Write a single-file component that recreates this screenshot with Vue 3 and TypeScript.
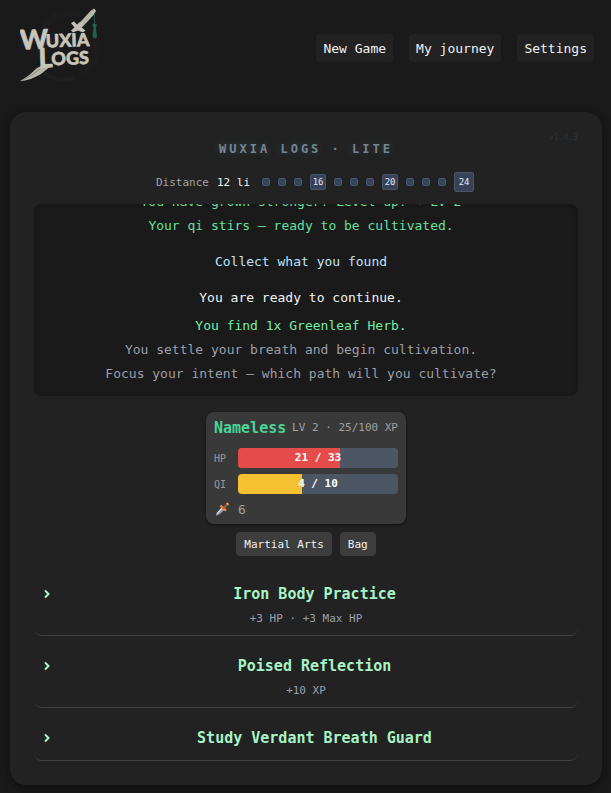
<script setup lang="ts">
interface LogLine {
  text: string
  tone: 'gain' | 'find' | 'prompt' | 'plain' | 'muted'
}

interface Marker {
  label?: string
  size: 'dot' | 'stop' | 'goal'
}

interface Stat {
  label: string
  kind: 'hp' | 'qi'
  current: number
  max: number
}

interface Choice {
  title: string
  detail?: string
}

const navItems: string[] = ['New Game', 'My journey', 'Settings']

const markers: Marker[] = [
  { size: 'dot' }, { size: 'dot' }, { size: 'dot' }, { size: 'stop', label: '16' },
  { size: 'dot' }, { size: 'dot' }, { size: 'dot' }, { size: 'stop', label: '20' },
  { size: 'dot' }, { size: 'dot' }, { size: 'dot' }, { size: 'goal', label: '24' },
]

const logLines: LogLine[] = [
  { text: 'You have grown stronger! Level up! → LV 2', tone: 'gain' },
  { text: 'Your qi stirs — ready to be cultivated.', tone: 'gain' },
  { text: 'Collect what you found', tone: 'prompt' },
  { text: 'You are ready to continue.', tone: 'plain' },
  { text: 'You find 1x Greenleaf Herb.', tone: 'find' },
  { text: 'You settle your breath and begin cultivation.', tone: 'muted' },
  { text: 'Focus your intent — which path will you cultivate?', tone: 'muted' },
]

const stats: Stat[] = [
  { label: 'HP', kind: 'hp', current: 21, max: 33 },
  { label: 'QI', kind: 'qi', current: 4, max: 10 },
]

const choices: Choice[] = [
  { title: 'Iron Body Practice', detail: '+3 HP · +3 Max HP' },
  { title: 'Poised Reflection', detail: '+10 XP' },
  { title: 'Study Verdant Breath Guard' },
]

const fill = (s: Stat): string => `${(s.current / s.max) * 100}%`
</script>

<template>
  <div class="page">
    <header class="top">
      <a class="logo" href="#" aria-label="Wuxia Logs">
        <svg width="84" height="80" viewBox="0 0 84 80" aria-hidden="true">
          <g fill="none" stroke="#1c1c1c" stroke-linecap="round">
            <path d="M25 18C34 6 48 2 60 6" stroke-width="8" />
            <path d="M75 32C80 46 74 60 62 66" stroke-width="7" />
            <path d="M26 66C34 72 44 73 54 70" stroke-width="4" stroke="#1f1f1f" />
          </g>
          <path d="M57.500 17L70.500 3L74 0.500L76 2.500L74.500 6L61 20.500Z" fill="#b9b6ac" />
          <path d="M51 15L54 13.500L57 16.500L60 14L62.500 16L61 19L65.500 22.500L63 24.500L58 22.500L53 24.500L51 22.500L54.500 19.500Z" fill="#c3c0b6" />
          <path d="M74.500 5V16" stroke="#24594a" stroke-width="1" />
          <path d="M72 17L74.500 15L77 17L76 19.500L77 29L75.500 30.500L73.500 30L72.500 28L73.500 19.500Z" fill="#216049" />
          <path d="M17 60L21 58L32 57L21 66C14 70 7 73 0 73C7 69 12 65 17 60Z" fill="#b9b6ac" />
          <path d="M3 72L12 67L20 61" stroke="#8b887f" stroke-width="1" fill="none" />
          <g class="wordmark" transform="rotate(-2 40 40)">
            <text x="0" y="40" font-size="27">W</text>
            <text x="26" y="39" font-size="18">UXIA</text>
            <text x="18" y="59" font-size="27">L</text>
            <text x="31" y="57" font-size="18">OGS</text>
          </g>
        </svg>
      </a>
      <nav class="nav">
        <button v-for="item in navItems" :key="item" type="button" class="nav-button">{{ item }}</button>
      </nav>
    </header>

    <main class="panel">
      <span class="version">v1.4.3</span>
      <h1 class="title">WUXIA LOGS · LITE</h1>

      <div class="distance">
        <span class="distance-label">Distance</span>
        <span class="distance-value">12 li</span>
        <div class="track">
          <span v-for="(m, i) in markers" :key="i" class="marker" :class="m.size">{{ m.label }}</span>
        </div>
      </div>

      <section class="log" aria-label="Journey log">
        <p v-for="line in logLines" :key="line.text" class="line" :class="line.tone">{{ line.text }}</p>
      </section>

      <section class="hero">
        <div class="hero-head">
          <strong class="hero-name">Nameless</strong>
          <span class="hero-level">LV 2 · 25/100 XP</span>
        </div>
        <div v-for="s in stats" :key="s.kind" class="stat">
          <span class="stat-label">{{ s.label }}</span>
          <div class="bar">
            <div class="bar-fill" :class="s.kind" :style="{ width: fill(s) }"></div>
            <span class="bar-text">{{ s.current }} / {{ s.max }}</span>
          </div>
        </div>
        <div class="attack">
          <svg width="16" height="16" viewBox="0 0 16 16" aria-hidden="true">
            <path d="M2 14.500L3 11.500L8 6L10.500 8.500L5.500 13Z" fill="#d3d6de" />
            <path d="M2 14.500L9.300 7.200L10.500 8.500L5.500 13Z" fill="#9a99ab" />
            <path d="M9 6L12.500 2.500L14 4L10.500 7.500Z" fill="#9b5a3c" />
            <path d="M6 4.500L7.500 4L12.500 8.500L12 10.200L10.500 10L6.300 6Z" fill="#f0913c" />
            <path d="M8 6.500L9 5.800L10.800 7.500L10 8.500Z" fill="#d8423c" />
            <path d="M12 2.500L13.500 1.500L15 3L14 4.500Z" fill="#f2b04e" />
          </svg>
          <span>6</span>
        </div>
      </section>

      <div class="actions">
        <button type="button" class="action">Martial Arts</button>
        <button type="button" class="action">Bag</button>
      </div>

      <div class="choices">
        <button v-for="c in choices" :key="c.title" type="button" class="choice">
          <span class="choice-head">
            <svg class="chevron" width="8" height="10" viewBox="0 0 8 10" aria-hidden="true">
              <path d="M2 1.500L5.500 5L2 8.500" />
            </svg>
            <span class="choice-title">{{ c.title }}</span>
          </span>
          <span v-if="c.detail" class="choice-detail">{{ c.detail }}</span>
        </button>
      </div>
    </main>
  </div>
</template>

<style>
body {
  margin: 0;
  background: #1a1a1a;
}
</style>

<style scoped>
.page {
  box-sizing: border-box;
  min-height: 100vh;
  padding: 0 9px 8px 10px;
  color: #f2f2f2;
  font-family: 'DejaVu Sans Mono', 'Liberation Mono', monospace;
  font-size: 13px;
}

button {
  margin: 0;
  border: 0;
  color: inherit;
  font: inherit;
  cursor: pointer;
}

.top {
  display: flex;
  align-items: flex-start;
  justify-content: space-between;
  height: 112px;
  padding: 0 8px 0 10px;
}

.logo {
  padding-top: 8px;
}

.logo svg {
  display: block;
}

.wordmark {
  fill: #c8c5bb;
  stroke: #c8c5bb;
  stroke-width: 0.6;
  stroke-linejoin: round;
  font-family: Lato, 'Open Sans', sans-serif;
  font-weight: 900;
}

.nav {
  display: flex;
  gap: 16px;
  padding-top: 34px;
}

.nav-button {
  height: 28px;
  padding: 0 7px;
  border-radius: 4px;
  background: #222;
}

.panel {
  position: relative;
  display: flex;
  flex-direction: column;
  padding: 24px;
  border-radius: 16px;
  background: #222;
  box-shadow: 0 2px 10px rgba(0, 0, 0, 0.5);
}

.version {
  position: absolute;
  top: 20px;
  right: 24px;
  color: #2d3338;
  font-size: 8px;
  line-height: 12px;
}

.title {
  margin: 0 0 10px;
  color: #758797;
  font-size: 12px;
  font-weight: 700;
  line-height: 26px;
  letter-spacing: 3px;
  text-align: center;
  text-shadow: 0 0 8px rgba(113, 150, 170, 0.3);
}

.distance {
  display: flex;
  align-items: center;
  justify-content: center;
  gap: 8px;
  height: 20px;
  margin-bottom: 12px;
  padding-left: 18px;
  font-size: 11px;
}

.distance-label {
  color: #a3a3a3;
}

.track {
  display: flex;
  align-items: center;
  gap: 8px;
  padding-left: 4px;
}

.marker {
  display: grid;
  place-items: center;
  box-sizing: border-box;
  border: 1px solid #4a5568;
  border-radius: 2px;
  background: #37425a;
  color: #e2e8f0;
  font-size: 9px;
}

.dot {
  width: 8px;
  height: 8px;
  background: #35445a;
}

.stop {
  width: 16px;
  height: 16px;
}

.goal {
  width: 20px;
  height: 20px;
}

.log {
  display: flex;
  flex-direction: column;
  justify-content: flex-end;
  box-sizing: border-box;
  height: 192px;
  margin-bottom: 16px;
  padding: 10px 10px 10px 0;
  overflow: hidden;
  border-radius: 8px;
  background: #1a1a1a;
  box-shadow: inset 0 1px 4px rgba(0, 0, 0, 0.2);
  text-align: center;
}

.line {
  flex: none;
  margin: 0;
  line-height: 24px;
}

.gain {
  color: #68e0a0;
}

.find {
  margin-top: 4px;
  color: #72eda8;
}

.prompt {
  margin: 12px 0;
  color: #bee3f8;
}

.muted {
  color: #9a9fa8;
}

.hero {
  display: flex;
  flex-direction: column;
  align-self: center;
  gap: 6px;
  box-sizing: border-box;
  width: 200px;
  padding: 6px 8px;
  border-radius: 8px;
  background: #393939;
  box-shadow: 0 1px 3px rgba(0, 0, 0, 0.5);
}

.hero-head {
  display: flex;
  align-items: center;
  justify-content: space-between;
  margin-bottom: 4px;
  line-height: 20px;
  white-space: nowrap;
}

.hero-name {
  color: #48d597;
  font-size: 15px;
}

.hero-level {
  color: #a0a0a0;
  font-size: 11px;
}

.stat {
  display: flex;
  align-items: center;
}

.stat-label {
  width: 24px;
  color: #999;
  font-size: 10px;
}

.bar {
  position: relative;
  flex: 1;
  height: 20px;
  overflow: hidden;
  border-radius: 4px;
  background: #4d5665;
}

.bar-fill {
  height: 100%;
}

.hp {
  background: #e54c49;
}

.qi {
  background: #f5c132;
}

.bar-text {
  position: absolute;
  inset: 0;
  color: #fff;
  font-size: 11px;
  font-weight: 700;
  line-height: 20px;
  text-align: center;
}

.attack {
  display: flex;
  align-items: center;
  gap: 8px;
  height: 18px;
  color: #a0a0a0;
}

.actions {
  display: flex;
  justify-content: center;
  gap: 8px;
  margin: 8px 0 16px;
}

.action {
  height: 24px;
  padding: 0 8px;
  border-radius: 4px;
  background: #3d3d3d;
  font-size: 11px;
}

.choices {
  display: flex;
  flex-direction: column;
  gap: 8px;
}

.choice {
  display: flex;
  flex-direction: column;
  padding: 10px 0;
  border-bottom: 1px solid #424242;
  border-radius: 8px;
  background: #222;
}

.choice-head {
  display: flex;
  align-items: center;
  padding-left: 9px;
}

.chevron {
  flex: none;
  fill: none;
  stroke: #a8f3c6;
  stroke-width: 2;
}

.choice-title {
  flex: 1;
  color: #a8f3c6;
  font-size: 15px;
  font-weight: 700;
  line-height: 24px;
}

.choice-detail {
  padding-top: 7px;
  color: #9aa1ac;
  font-size: 11px;
  line-height: 12px;
}
</style>
